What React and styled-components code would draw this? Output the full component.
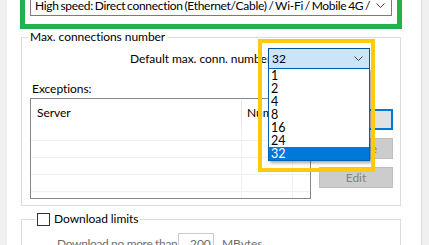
import React from "react";
import styled, { createGlobalStyle } from "styled-components";

const Global = createGlobalStyle`
  html, body { margin: 0; padding: 0; background: #fff; }
  body { width: 429px; height: 245px; overflow: hidden; font-family: Lato, "Noto Sans", sans-serif; font-size: 12px; color: #000; letter-spacing: -0.05px; }
  * { box-sizing: border-box; }
`;

const Page = styled.div`
  display: flex;
  width: 429px;
  height: 245px;
  overflow: hidden;
`;

const EdgeLeft = styled.div`
  width: 7px;
  flex: none;
  background: #f0f0f0;
`;

const EdgeRight = styled.div`
  width: 8px;
  flex: none;
  background: #f0f0f0;
  border-left: 1px solid #dadada;
`;

const Main = styled.div`
  flex: 1;
  display: flex;
  flex-direction: column;
  padding-left: 13px;
  min-width: 0;
`;

const GreenMark = styled.div`
  margin-top: -16px;
  margin-right: 19px;
  border: 5px solid #22b14c;
  padding: 5px 5px 8px 5px;
`;

const Combo = styled.div`
  display: flex;
  align-items: center;
  height: ${(p) => p.$h || 22}px;
  width: ${(p) => (p.$w ? p.$w + "px" : "auto")};
  border: 1px solid ${(p) => (p.$open ? "#005499" : "#7a7a7a")};
  background: ${(p) => (p.$open ? "#cce4f7" : "#fff")};
  padding-left: ${(p) => p.$pl || 4}px;
  padding-right: 6px;
  white-space: nowrap;
  overflow: hidden;
  flex: none;
`;

const ComboText = styled.span`
  flex: 1;
  overflow: hidden;
  white-space: nowrap;
  letter-spacing: ${(p) => p.$ls || 0}px;
  word-spacing: ${(p) => p.$ws || 0}px;
`;

const Chevron = ({ color = "#444" }) => (
  <svg width="9" height="5" viewBox="0 0 9 5" style={{ flex: "none", marginLeft: 4 }}>
    <path d="M0.5 0.5 L4.5 4.5 L8.5 0.5" fill="none" stroke={color} strokeWidth="1" />
  </svg>
);

const Group = styled.fieldset`
  margin: 0 20px 0 1px;
  margin-top: ${(p) => p.$mt || 0}px;
  border: 1px solid #dcdcdc;
  padding: 0 7px ${(p) => p.$pb || 6}px 8px;
  min-width: 0;
`;

const Legend = styled.legend`
  padding: 0 2px;
  margin-left: ${(p) => p.$ml || -2}px;
  line-height: 16px;
  display: flex;
  align-items: center;
  gap: 4px;
  white-space: nowrap;
`;

const CheckBox = styled.span`
  display: inline-block;
  width: 13px;
  height: 13px;
  border: 1px solid #333;
  background: #fff;
`;

const ConnRow = styled.div`
  display: flex;
  justify-content: flex-end;
  align-items: center;
  margin-top: 3px;
  padding-right: 23px;
`;

const ConnLabel = styled.span`
  width: 138px;
  overflow: hidden;
  white-space: nowrap;
  line-height: 16px;
`;

const ComboWrap = styled.div`
  position: relative;
  flex: none;
`;

const YellowMark = styled.div`
  position: absolute;
  left: -10px;
  top: -9px;
  width: 117px;
  height: 133px;
  border: 4px solid #ffc90e;
  pointer-events: none;
  z-index: 3;
`;

const DropList = styled.ul`
  position: absolute;
  left: 0;
  top: 20px;
  width: 102px;
  margin: 0;
  padding: 0;
  list-style: none;
  background: #fff;
  border: 1px solid #0063b1;
  box-shadow: 2px 2px 3px rgba(0, 0, 0, 0.35);
  z-index: 2;
`;

const DropItem = styled.li`
  height: 13px;
  line-height: 13px;
  padding-left: 2px;
  font-size: 12.5px;
  background: ${(p) => (p.$sel ? "#0078d7" : "transparent")};
  color: ${(p) => (p.$sel ? "#fff" : "#000")};
`;

const SubLabel = styled.div`
  margin-top: 12px;
  padding-left: 2px;
  line-height: 16px;
`;

const ListRow = styled.div`
  display: flex;
  gap: 8px;
  margin-top: 1px;
`;

const ListView = styled.div`
  flex: 1;
  height: 101px;
  border: 1px solid #828790;
  display: flex;
  flex-direction: column;
  overflow: hidden;
`;

const LVHeader = styled.div`
  display: flex;
  height: 25px;
  flex: none;
`;

const LVHeadCell = styled.div`
  width: ${(p) => (p.$w ? p.$w + "px" : "auto")};
  flex: ${(p) => (p.$w ? "none" : "1")};
  display: flex;
  align-items: center;
  padding-left: ${(p) => p.$pl || 5}px;
  border-right: ${(p) => (p.$sep ? "1px solid #e5e5e5" : "none")};
  white-space: nowrap;
  overflow: hidden;
  margin: 1px 0 0 0;
`;

const LVRow = styled.div`
  display: flex;
  height: 17px;
  flex: none;
  border-bottom: 1px solid #f0f0f0;
`;

const LVCell = styled.div`
  width: ${(p) => (p.$w ? p.$w + "px" : "auto")};
  flex: ${(p) => (p.$w ? "none" : "1")};
  border-right: ${(p) => (p.$sep ? "1px solid #f0f0f0" : "none")};
`;

const ButtonCol = styled.div`
  width: 74px;
  flex: none;
  display: flex;
  flex-direction: column;
  gap: 8px;
  margin-top: 11px;
`;

const Btn = styled.div`
  height: 21px;
  display: flex;
  align-items: center;
  justify-content: center;
  background: ${(p) => (p.$focus ? "#e1e1e1" : "#cccccc")};
  border: ${(p) => (p.$focus ? "2px solid #0078d7" : "1px solid #bfbfbf")};
  color: ${(p) => (p.$focus ? "#000" : "#838383")};
`;

const LimitRow = styled.div`
  display: flex;
  align-items: center;
  margin-top: 6px;
  padding-left: 27px;
  color: #6d6d6d;
  white-space: nowrap;
`;

const LimitLabel = styled.span`
  width: 121px;
  flex: none;
  overflow: hidden;
  letter-spacing: -0.35px;
`;

const NumBox = styled.div`
  width: 36px;
  height: 21px;
  border: 1px solid #cccccc;
  margin-right: 8px;
  padding-left: 11px;
  display: flex;
  align-items: center;
  flex: none;
`;

const items = ["1", "2", "4", "8", "16", "24", "32"];

export default function App() {
  return (
    <>
      <Global />
      <Page>
        <EdgeLeft />
        <Main>
          <GreenMark>
            <Combo>
              <ComboText $ls={-0.3} $ws={-1}>High speed: Direct connection (Ethernet/Cable) / Wi-Fi / Mobile 4G / other</ComboText>
              <Chevron />
            </Combo>
          </GreenMark>

          <Group>
            <Legend>Max. connections number</Legend>
            <ConnRow>
              <ConnLabel>Default max. conn. number:</ConnLabel>
              <ComboWrap>
                <Combo $open $w={102} $h={21} $pl={3}>
                  <ComboText>32</ComboText>
                  <Chevron />
                </Combo>
                <DropList>
                  {items.map((it) => (
                    <DropItem key={it} $sel={it === "32"}>{it}</DropItem>
                  ))}
                </DropList>
                <YellowMark />
              </ComboWrap>
            </ConnRow>
            <SubLabel>Exceptions:</SubLabel>
            <ListRow>
              <ListView>
                <LVHeader>
                  <LVHeadCell $w={211} $sep $pl={6}>Server</LVHeadCell>
                  <LVHeadCell $w={51} $sep>Number</LVHeadCell>
                  <LVHeadCell />
                </LVHeader>
                {[0, 1, 2, 3, 4].map((r) => (
                  <LVRow key={r}>
                    <LVCell $w={211} $sep />
                    <LVCell $w={51} $sep />
                    <LVCell />
                  </LVRow>
                ))}
              </ListView>
              <ButtonCol>
                <Btn $focus>Add</Btn>
                <Btn>Remove</Btn>
                <Btn>Edit</Btn>
              </ButtonCol>
            </ListRow>
          </Group>

          <Group $mt={5}>
            <Legend $ml={5}>
              <CheckBox />
              <span>Download limits</span>
            </Legend>
            <LimitRow>
              <LimitLabel>Download no more than</LimitLabel>
              <NumBox>200</NumBox>
              MBytes
            </LimitRow>
          </Group>
        </Main>
        <EdgeRight />
      </Page>
    </>
  );
}
